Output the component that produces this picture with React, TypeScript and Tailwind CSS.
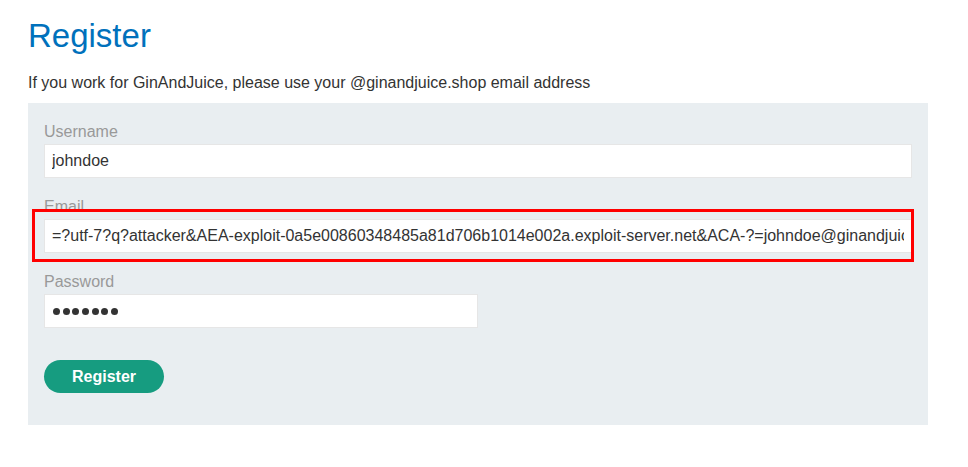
import React from "react";

export default function App() {
  const font = { fontFamily: '"Liberation Sans", Arial, sans-serif' };
  return (
    <div className="min-h-[467px] w-[968px] bg-white text-[#333333]" style={font}>
      <div className="px-[28px] pt-[14px]">
        <h1 className="text-[33px] leading-[44px] text-[#0071bc] font-normal">Register</h1>
        <p className="mt-[13px] text-[16px] leading-[24px] text-[#333333]">
          If you work for GinAndJuice, please use your @ginandjuice.shop email address
        </p>
        <form className="mt-[8px] w-[900px] bg-[#e9eef1] px-[16px] pt-[17px] pb-[32px] flex flex-col">
          <label className="text-[16px] leading-[24px] text-[#999999]">Username</label>
          <input
            readOnly
            value="johndoe"
            className="h-[34px] w-[868px] bg-white border border-[#e6e6e6] px-[7px] text-[16px] text-[#333333] outline-none"
            style={font}
          />
          <label className="mt-[17px] text-[16px] leading-[24px] text-[#999999]">Email</label>
          <div className="relative w-[868px]">
            <input
              readOnly
              value="=?utf-7?q?attacker&AEA-exploit-0a5e00860348485a81d706b1014e002a.exploit-server.net&ACA-?=johndoe@ginandjuice.shop"
              className="h-[34px] w-[868px] bg-white border border-[#e6e6e6] px-[7px] text-[16px] text-[#333333] outline-none"
              style={font}
            />
            <div className="pointer-events-none absolute left-[-12px] top-[-10px] w-[882px] h-[53px] border-[3px] border-[#ff0000]" />
          </div>
          <label className="mt-[17px] text-[16px] leading-[24px] text-[#999999]">Password</label>
          <div
            role="textbox"
            aria-label="Password"
            className="h-[34px] w-[434px] bg-white border border-[#e6e6e6] pl-[8px] flex items-center gap-[2.7px]"
          >
            {Array.from({ length: 7 }).map((_, i) => (
              <span key={i} className="block w-[7px] h-[7px] rounded-full bg-[#333333]" />
            ))}
          </div>
          <div className="mt-[32px]">
            <button
              type="button"
              className="h-[33px] w-[120px] rounded-full bg-[#169c80] text-white font-bold text-[16px]"
              style={font}
            >
              Register
            </button>
          </div>
        </form>
      </div>
    </div>
  );
}
